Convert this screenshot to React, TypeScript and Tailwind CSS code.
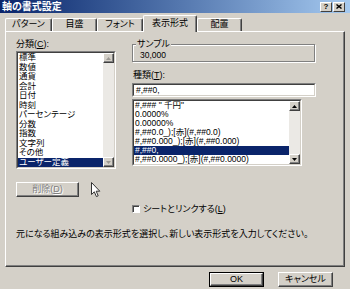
import React from 'react';

const FONT = "font-['Liberation_Sans','Noto_Sans_CJK_JP',sans-serif] [font-feature-settings:'palt']";

const categories = ['標準', '数値', '通貨', '会計', '日付', '時刻', 'パーセンテージ', '分数', '指数', '文字列', 'その他', 'ユーザー定義'];

const formats = [
  '#,### " 千円"',
  '0.0000%',
  '0.00000%',
  '#,##0.0_);[赤](#,##0.0)',
  '#,##0.000_);[赤](#,##0.000)',
  '#,##0,',
  '#,##0.0000_);[赤](#,##0.0000)',
];

const Arrow: React.FC<{ up?: boolean; disabled?: boolean }> = ({ up, disabled }) => (
  <div className="h-[10px] w-[11px] shrink-0 flex items-center justify-center bg-[#d4d0c8] border border-t-white border-l-white border-b-[#404040] border-r-[#404040] shadow-[inset_-1px_-1px_0_#808080]">
    <svg width="5" height="3" viewBox="0 0 5 3">
      <path d={up ? 'M2.5 0 L5 3 L0 3 Z' : 'M0 0 L5 0 L2.5 3 Z'} fill={disabled ? '#9a9792' : '#000'} />
    </svg>
  </div>
);

const Scrollbar: React.FC<{ disabled?: boolean }> = ({ disabled }) => (
  <div className="w-[11px] h-full flex flex-col">
    <Arrow up disabled={disabled} />
    <div className="flex-1 bg-[#ebe9e5]" />
    <Arrow disabled={disabled} />
  </div>
);

// sunken 3D frame (listbox, edit box)
const Sunken: React.FC<{ className?: string; children?: React.ReactNode }> = ({ className = '', children }) => (
  <div className={`border border-t-[#808080] border-l-[#808080] border-b-white border-r-white ${className}`}>
    <div className="h-full border border-t-[#404040] border-l-[#404040] border-b-[#d4d0c8] border-r-[#d4d0c8] bg-white flex">
      {children}
    </div>
  </div>
);

const Tab: React.FC<{ label: string; w: string; active?: boolean }> = ({ label, w, active }) => (
  <div
    className={`${w} flex items-center justify-center rounded-t-[2px] bg-[#d4d0c8] border-l border-t border-r border-l-white border-t-white border-r-[#404040] shadow-[inset_-1px_0_0_#808080] text-[9px] ${
      active ? 'h-[17px] pb-[1px]' : 'h-[13px] mt-[3px]'
    }`}
  >
    {label}
  </div>
);

const App: React.FC = () => {
  return (
    <div className={`relative w-[350px] h-[289px] overflow-hidden bg-[#d4d0c8] text-black ${FONT}`}>
      {/* Title bar */}
      <div className="h-[13px] flex items-center bg-gradient-to-r from-[#0a246a] to-[#a6caf0] pl-[2px] pr-[5px]">
        <span className="flex-1 text-white text-[10px] leading-[12px] font-bold">軸の書式設定</span>
        <div className="flex gap-[1px]">
          <div className="w-[12px] h-[10px] flex items-center justify-center bg-[#d4d0c8] border border-t-white border-l-white border-b-[#404040] border-r-[#404040] text-[8px] leading-none font-bold">
            ?
          </div>
          <div className="w-[12px] h-[10px] flex items-center justify-center bg-[#d4d0c8] border border-t-white border-l-white border-b-[#404040] border-r-[#404040]">
            <svg width="6" height="5" viewBox="0 0 6 5">
              <path d="M0.5 0.5 L5.5 4.5 M5.5 0.5 L0.5 4.5" stroke="#000" strokeWidth="1.4" />
            </svg>
          </div>
        </div>
      </div>

      {/* Tabs */}
      <div className="relative z-10 flex items-start h-[17px] mt-[2px] -mb-[1px] px-[5px]">
        <Tab label="パターン" w="w-[47px]" />
        <Tab label="目盛" w="w-[45px]" />
        <Tab label="フォント" w="w-[46px]" />
        <Tab label="表示形式" w="w-[54px]" active />
        <Tab label="配置" w="w-[45px]" />
      </div>

      {/* Panel */}
      <div className="mx-[5px] h-[236px] border border-t-white border-l-white border-b-[#404040] border-r-[#404040] shadow-[inset_-1px_-1px_0_#808080] pl-[10px] pt-[7px] text-[9px]">
        <div className="flex">
          {/* Left column */}
          <div className="w-[100px]">
            <div className="h-[10px] leading-[10px]">
              分類(<span className="underline">C</span>):
            </div>
            <Sunken className="mt-[2px] h-[118px]">
              <div className="flex-1 leading-[9.5px] text-[8.5px]">
                {categories.map((c, i) => (
                  <div
                    key={c}
                    className={`h-[9.5px] pl-[1px] whitespace-nowrap ${i === categories.length - 1 ? 'bg-[#0a246a] text-white' : ''}`}
                  >
                    {c}
                  </div>
                ))}
              </div>
              <Scrollbar disabled />
            </Sunken>
            <div className="mt-[13px] w-[63px] h-[15px] flex items-center justify-center border border-t-white border-l-white border-b-[#404040] border-r-[#404040] shadow-[inset_-1px_-1px_0_#808080] text-[#808080] [text-shadow:1px_1px_0_#fff]">
              削除(<span className="underline">D</span>)
            </div>
          </div>

          {/* Right column */}
          <div className="ml-[16px] w-[184px]">
            <fieldset className="h-[23px] w-[183px] border border-[#808080] shadow-[1px_1px_0_#fff,inset_1px_1px_0_#fff] pl-[7px] pr-0 pb-0 m-0">
              <legend className="ml-[-4px] px-[1px] h-[10px] leading-[10px] bg-[#d4d0c8]">サンプル</legend>
              <div className="h-[11px] leading-[12px] text-[8.5px]">30,000</div>
            </fieldset>
            <div className="mt-[8px] h-[10px] leading-[10px] pl-[1px]">
              種類(<span className="underline">T</span>):
            </div>
            <Sunken className="mt-[3px] h-[14px] w-[184px]">
              <div className="flex-1 pl-[2px] text-[8.5px] leading-[10px]">#,##0,</div>
            </Sunken>
            <Sunken className="mt-[2px] h-[67px] w-[170px]">
              <div className="flex-1 text-[8.5px] leading-[9px]">
                {formats.map((f, i) => (
                  <div key={f} className={`h-[9px] pl-[1px] whitespace-nowrap ${i === 5 ? 'bg-[#0a246a] text-white' : ''}`}>
                    {f}
                  </div>
                ))}
              </div>
              <Scrollbar />
            </Sunken>
            <div className="mt-[38px] h-[10px] flex items-center gap-[3px]">
              <div className="w-[8px] h-[8px] bg-white border border-t-[#808080] border-l-[#808080] border-b-white border-r-white shadow-[inset_1px_1px_0_#404040]" />
              <span className="leading-[10px]">
                シートとリンクする(<span className="underline">L</span>)
              </span>
            </div>
          </div>
        </div>

        <div className="mt-[15px] h-[10px] leading-[10px] whitespace-nowrap">
          元になる組み込みの表示形式を選択し、新しい表示形式を入力してください。
        </div>
      </div>

      {/* Buttons */}
      <div className="flex justify-end gap-[14px] mt-[5px] pr-[17px] text-[9px]">
        <div className="w-[55px] h-[15px] border border-black">
          <div className="h-full flex items-center justify-center border border-t-white border-l-white border-b-[#404040] border-r-[#404040] shadow-[inset_-1px_-1px_0_#808080]">
            OK
          </div>
        </div>
        <div className="w-[55px] h-[15px] flex items-center justify-center border border-t-white border-l-white border-b-[#404040] border-r-[#404040] shadow-[inset_-1px_-1px_0_#808080]">
          キャンセル
        </div>
      </div>

      {/* Mouse pointer */}
      <svg className="absolute left-[91px] top-[182px]" width="10" height="16" viewBox="0 0 10 16">
        <path d="M0.5 0.5 L0.5 12.5 L3.3 9.8 L5.4 14.6 L7.2 13.8 L5.2 9.2 L8.8 9.2 Z" fill="#fff" stroke="#333" strokeWidth="1" strokeLinejoin="round" />
      </svg>
    </div>
  );
};

export default App;
